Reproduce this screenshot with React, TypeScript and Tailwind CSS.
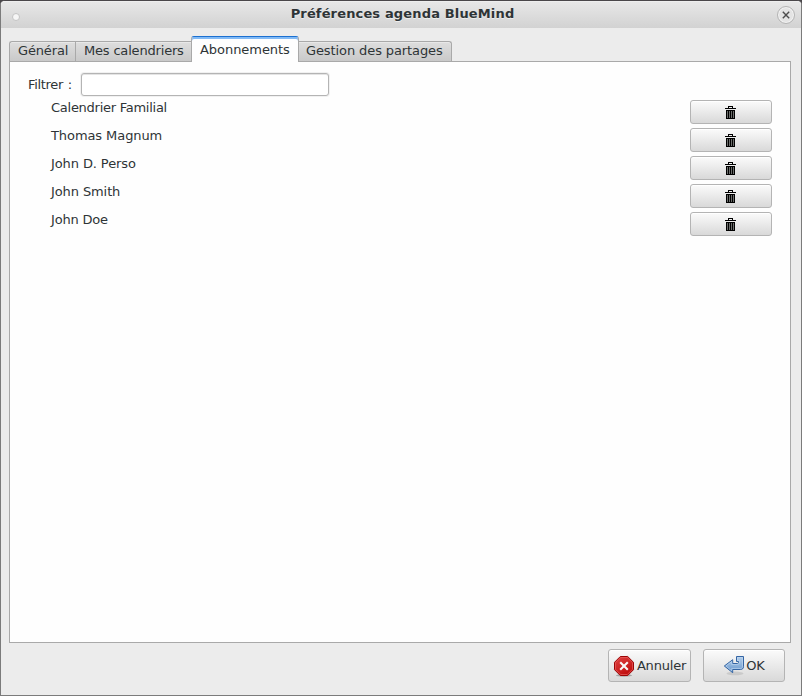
import React from "react";

const calendars = [
  { name: "Calendrier Familial", tracking: "tracking-[-0.26px]" },
  { name: "Thomas Magnum", tracking: "tracking-[-0.08px]" },
  { name: "John D. Perso", tracking: "tracking-[-0.1px]" },
  { name: "John Smith", tracking: "tracking-[-0.1px]" },
  { name: "John Doe", tracking: "tracking-[-0.18px]" },
];

const buttonSkin =
  "flex items-center justify-center rounded-[3px] border border-[#b4b4b4] bg-linear-to-b from-[#fbfbfb] to-[#d9d9d9] shadow-[inset_0_1px_0_#ffffff]";

const inactiveTab =
  "h-5 border-[#a9a9a9] bg-linear-to-b from-[#dedede] to-[#c9c9c9] pt-px whitespace-nowrap shadow-[inset_0_1px_0_#e8e8e8]";

function TrashIcon() {
  return (
    <svg className="mt-px mr-px" width="11" height="13" viewBox="0 0 11 13" shapeRendering="crispEdges">
      <path d="M3 0h5v2H7V1H4v1H3zM0 2h11v1H0zM1 4h9v9H1z" fill="#000" />
      <path d="M2 5h1v7H2zM4 5h1v7H4zM6 5h1v7H6zM8 5h1v7H8z" fill="#6c6e6c" />
    </svg>
  );
}

function StopIcon() {
  return (
    <svg className="mt-px" width="22" height="22" viewBox="0 0 22 22">
      <defs>
        <linearGradient id="stop" x1="0" y1="0" x2="0.6" y2="1">
          <stop offset="0" stopColor="#e04444" />
          <stop offset="1" stopColor="#c00d0d" />
        </linearGradient>
      </defs>
      <ellipse cx="11" cy="20.4" rx="8" ry="1.3" fill="#000" opacity=".25" />
      <path d="M7.3 1.5h7.4l5.8 5.8v7.4l-5.8 5.8H7.3l-5.8-5.8V7.3z" fill="url(#stop)" stroke="#9c0606" />
      <path d="M7.7 2.5h6.6l5.2 5.2v6.6l-5.2 5.2H7.7l-5.2-5.2V7.7z" fill="none" stroke="#e86060" strokeWidth=".7" />
      <path d="m7.2 7.2 7.6 7.6m0-7.6-7.6 7.6" stroke="#f8f8f8" strokeWidth="2.1" />
    </svg>
  );
}

function ReturnIcon() {
  return (
    <svg className="mr-px" width="22" height="22" viewBox="0 0 22 22">
      <defs>
        <linearGradient id="ret" x1="0" y1="0" x2="0" y2="1">
          <stop offset="0" stopColor="#b4cfeb" />
          <stop offset="1" stopColor="#6997cc" />
        </linearGradient>
      </defs>
      <ellipse cx="12" cy="18.4" rx="8.5" ry="1.8" fill="#000" opacity=".1" />
      <path
        d="M13.5 1.5h7v10.2c0 1.8-1.2 2.8-3 2.8h-7.8v3.2L1.3 11l8.4-6.3v3.8h4.5c1 0 1.3-.4 1.3-1.3V6.5h-2z"
        fill="url(#ret)"
        stroke="#3465a4"
        strokeLinejoin="round"
      />
      <path
        d="M14.5 2.5h5v9.2c0 1.2-.8 1.8-2 1.8H8.7v2.3L2.9 11l5.8-4.3v2.8h5.6c1.4 0 2.2-.8 2.2-2.1V5.5h-2z"
        fill="none"
        stroke="#c3d9f0"
        strokeWidth=".6"
      />
    </svg>
  );
}

export default function App() {
  return (
    <div className="h-[696px] w-[802px] overflow-hidden bg-[#4a474a] font-['DejaVu_Sans',sans-serif] text-[13px] leading-4 text-[#2e3436]">
      <div className="flex h-full flex-col rounded-t-[5px] border border-t-[#4a474a] border-x-[#7b7b7b] border-b-[#7b7b7b] bg-[#ececec]">
        <header className="flex h-[27px] shrink-0 items-center rounded-t-[4px] bg-linear-to-b from-[#e8e8e8] to-[#d2d2d2] pr-[6px] pl-[11px] shadow-[inset_0_1px_0_#eeeeee]">
          <span className="mt-[5px] h-2 w-2 rounded-full border border-[#c4c4c4] bg-[#f6f6f6]" />
          <h1 className="-mt-[2px] flex-1 pl-[8px] text-center font-bold tracking-[0.15px] [text-shadow:0_1px_0_#ededed]">
            Préférences agenda BlueMind
          </h1>
          <button className="flex h-[18px] w-[18px] items-center justify-center rounded-full border border-[#b4b4b4] bg-[#e4e4e4] shadow-[inset_0_0_0_1px_#f3f3f3]">
            <svg width="8" height="8" viewBox="0 0 8 8">
              <path d="m.8.8 6.4 6.4m0-6.4L.8 7.2" stroke="#4d4d4d" strokeWidth="1.4" />
            </svg>
          </button>
        </header>

        <nav className="flex h-[33px] shrink-0 items-end pl-2">
          <div className={`${inactiveTab} w-[66px] rounded-tl-[3px] border border-r-0 border-b-0 pl-2 tracking-[-0.15px]`}>Général</div>
          <div className={`${inactiveTab} w-[116px] border border-r-0 border-b-0 pl-2 tracking-[-0.18px]`}>Mes calendriers</div>
          <div className="relative z-10 -mb-px h-[26px] w-[108px] rounded-t-[3px] border border-b-0 border-[#a9a9a9] border-t-[#1b70d1] bg-[#fefefe] pt-[5px] pl-2 tracking-[-0.05px] whitespace-nowrap shadow-[inset_0_2px_0_#82baf5]">
            Abonnements
          </div>
          <div className={`${inactiveTab} w-[153px] rounded-tr-[3px] border border-b-0 border-l-0 pl-[7px] tracking-[-0.1px]`}>Gestion des partages</div>
        </nav>

        <main className="mx-2 mr-[10px] h-[582px] shrink-0 border border-[#a9a9a9] bg-[#fefefe] pt-[11px]">
          <label className="flex h-[23px] items-center pl-[18px]">
            <span className="w-[53px] tracking-[-0.32px] [word-spacing:1px]">Filtrer :</span>
            <input className="h-[23px] w-[248px] rounded-[3px] border border-[#b4b4b4] bg-white px-1 shadow-[0_0_0_1px_#f1f1f1,inset_0_1px_0_#e4e4e4] outline-none" />
          </label>
          <ul className="pt-[3px] pr-[18px] pl-[41px]">
            {calendars.map(({ name, tracking }) => (
              <li key={name} className="flex h-7 items-start justify-between">
                <span className={`pt-px ${tracking}`}>{name}</span>
                <button className={`${buttonSkin} mt-px h-6 w-[82px]`}>
                  <TrashIcon />
                </button>
              </li>
            ))}
          </ul>
        </main>

        <footer className="flex justify-end gap-3 pt-[6px] pr-4">
          <button className={`${buttonSkin} h-[33px] w-[83px] gap-[2px]`}>
            <StopIcon />
            <span className="pt-px tracking-[-0.2px]">Annuler</span>
          </button>
          <button className={`${buttonSkin} h-[33px] w-[82px]`}>
            <ReturnIcon />
            <span className="pt-px tracking-[-0.2px]">OK</span>
          </button>
        </footer>
      </div>
    </div>
  );
}
